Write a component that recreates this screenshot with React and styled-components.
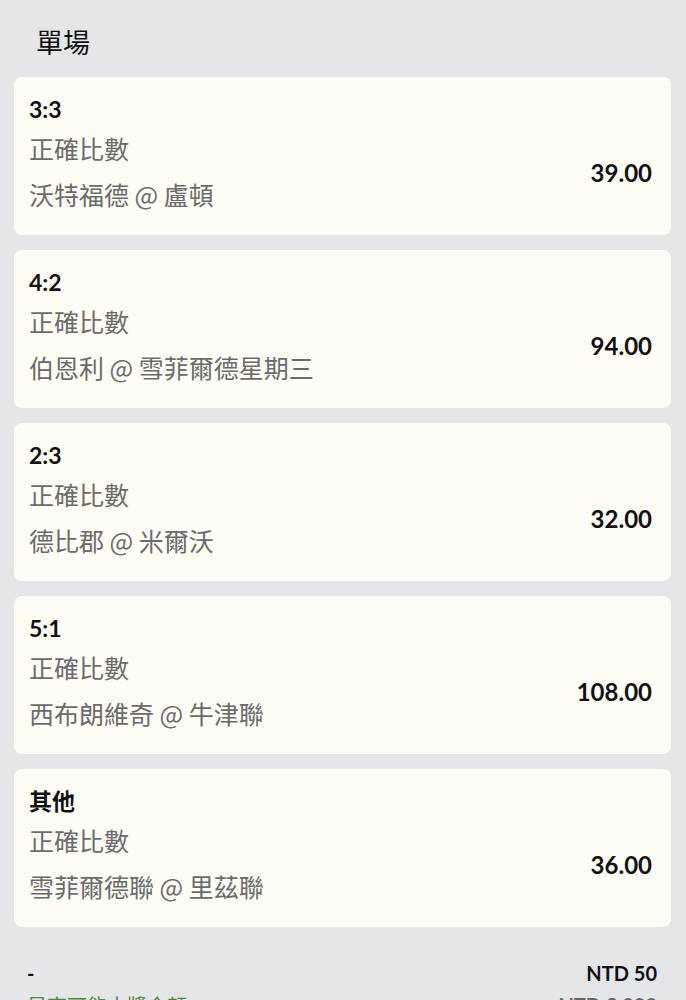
import React from "react";
import styled, { createGlobalStyle } from "styled-components";

const GlobalStyle = createGlobalStyle`
  html, body {
    margin: 0;
    padding: 0;
    background: #e5e6e8;
    font-family: Lato, "Noto Sans CJK TC", sans-serif;
  }
`;

const Page = styled.div`
  width: 686px;
  height: 1000px;
  overflow: hidden;
  background: #e5e6e8;
  padding: 0 15px 0 14px;
  box-sizing: border-box;
`;

const Heading = styled.h2`
  margin: 0;
  padding: 22px 0 0 22px;
  height: 77px;
  box-sizing: border-box;
  font-family: "Noto Sans CJK TC", sans-serif;
  font-size: 27px;
  line-height: 40px;
  font-weight: 400;
  color: #111;
`;

const List = styled.div`
  display: flex;
  flex-direction: column;
  gap: 15px;
`;

const Card = styled.div`
  display: flex;
  align-items: center;
  justify-content: space-between;
  height: 158px;
  box-sizing: border-box;
  padding: 16px 19px 18px 15px;
  background: #fdfdf5;
  border-radius: 8px;
`;

const Info = styled.div`
  display: flex;
  flex-direction: column;
  align-self: stretch;
`;

const Score = styled.div`
  font-size: 23px;
  line-height: 32px;
  font-weight: 700;
  color: #111;
`;

const Line = styled.div`
  margin-top: ${(p) => p.$gap}px;
  font-family: "Noto Sans CJK TC", sans-serif;
  font-size: 25px;
  line-height: 42px;
  color: #6b6b6b;
`;

const Odds = styled.div`
  padding-top: 34px;
  font-size: 24px;
  font-weight: 700;
  color: #111;
`;

const Footer = styled.div`
  padding: 33px 14px 0 13px;
`;

const FooterRow = styled.div`
  display: flex;
  justify-content: space-between;
  align-items: center;
  height: ${(p) => p.$h}px;
`;

const Dash = styled.span`
  font-size: 20px;
  font-weight: 700;
  color: #111;
`;

const Amount = styled.span`
  font-size: 20px;
  font-weight: 700;
  color: ${(p) => (p.$muted ? "#666" : "#111")};
`;

const GreenText = styled.span`
  font-family: "Noto Sans CJK TC", sans-serif;
  font-size: 20px;
  color: #4c8c34;
`;

const bets = [
  { score: "3:3", teams: "沃特福德 @ 盧頓", odds: "39.00" },
  { score: "4:2", teams: "伯恩利 @ 雪菲爾德星期三", odds: "94.00" },
  { score: "2:3", teams: "德比郡 @ 米爾沃", odds: "32.00" },
  { score: "5:1", teams: "西布朗維奇 @ 牛津聯", odds: "108.00" },
  { score: "其他", teams: "雪菲爾德聯 @ 里茲聯", odds: "36.00" },
];

const App = () => {
  return (
    <Page>
      <GlobalStyle />
      <Heading>單場</Heading>
      <List>
        {bets.map((b) => (
          <Card key={b.score}>
            <Info>
              <Score>{b.score}</Score>
              <Line $gap={2}>正確比數</Line>
              <Line $gap={4}>{b.teams}</Line>
            </Info>
            <Odds>{b.odds}</Odds>
          </Card>
        ))}
      </List>
      <Footer>
        <FooterRow $h={26}>
          <Dash>-</Dash>
          <Amount>NTD 50</Amount>
        </FooterRow>
        <FooterRow $h={38}>
          <GreenText>最高可能中獎金額</GreenText>
          <Amount $muted>NTD 3,900</Amount>
        </FooterRow>
      </Footer>
    </Page>
  );
};

export default App;
